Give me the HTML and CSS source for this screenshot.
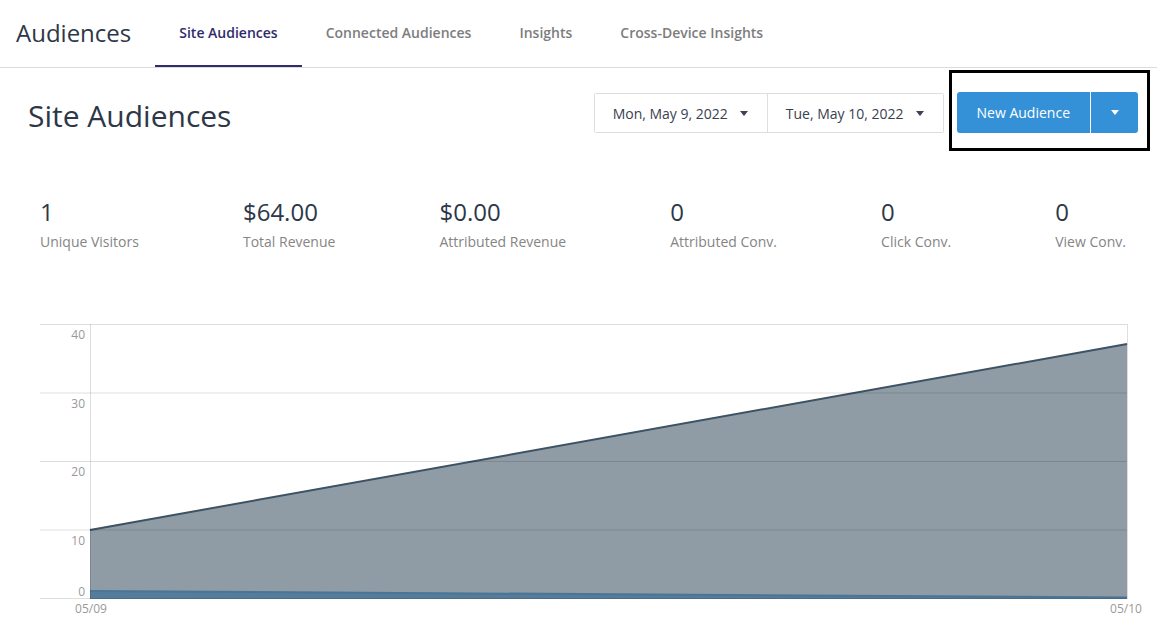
FILE: index.html
```html
<!DOCTYPE html>
<html>
<head>
<meta charset="utf-8">
<link rel="stylesheet" href="styles.css">
</head>
<body>
<header class="topbar">
  <div class="brand">Audiences</div>
  <nav class="tabs">
    <a class="tab active">Site Audiences</a>
    <a class="tab">Connected Audiences</a>
    <a class="tab">Insights</a>
    <a class="tab">Cross-Device Insights</a>
  </nav>
</header>

<section class="toolbar">
  <h1 class="title">Site Audiences</h1>
  <div class="dates">
    <button class="date-btn">Mon, May 9, 2022 <span class="caret"></span></button>
    <button class="date-btn">Tue, May 10, 2022 <span class="caret"></span></button>
  </div>
  <div class="split">
    <button class="primary">New Audience</button>
    <button class="primary drop"><span class="caret white"></span></button>
    <div class="annot"></div>
  </div>
</section>

<section class="stats">
  <div class="stat"><div class="val">1</div><div class="lbl">Unique Visitors</div></div>
  <div class="stat"><div class="val">$64.00</div><div class="lbl">Total Revenue</div></div>
  <div class="stat"><div class="val">$0.00</div><div class="lbl">Attributed Revenue</div></div>
  <div class="stat"><div class="val">0</div><div class="lbl">Attributed Conv.</div></div>
  <div class="stat"><div class="val">0</div><div class="lbl">Click Conv.</div></div>
  <div class="stat"><div class="val">0</div><div class="lbl">View Conv.</div></div>
</section>

<section class="chart">
  <svg width="1117" height="310" viewBox="0 0 1117 310">
    <polygon points="50,216 1087,30 1087,284.5 50,284.5" fill="#8f9ca5"/>
    <polygon points="50,277 1087,283.5 1087,285 50,285" fill="#557c9b"/>
    <line x1="50" y1="277" x2="1087" y2="283.5" stroke="#4a7596" stroke-width="2"/>
    <line x1="50" y1="216" x2="1087" y2="30" stroke="#3d5263" stroke-width="2"/>
    <g stroke="rgba(0,0,0,0.13)" stroke-width="1">
      <line x1="0" y1="10.5" x2="1087" y2="10.5"/>
      <line x1="0" y1="79" x2="1087" y2="79"/>
      <line x1="0" y1="147.5" x2="1087" y2="147.5"/>
      <line x1="0" y1="216" x2="1087" y2="216"/>
      <line x1="0" y1="284.5" x2="1087" y2="284.5"/>
      <line x1="50.5" y1="10" x2="50.5" y2="285"/>
      <line x1="1087.5" y1="10" x2="1087.5" y2="285"/>
    </g>
    <g class="axis" text-anchor="end">
      <text x="45" y="25">40</text>
      <text x="45" y="94">30</text>
      <text x="45" y="162">20</text>
      <text x="45" y="231">10</text>
      <text x="45" y="282">0</text>
    </g>
    <g class="axis" text-anchor="middle">
      <text x="51" y="299">05/09</text>
      <text x="1086" y="299">05/10</text>
    </g>
  </svg>
</section>
</body>
</html>
```

FILE: styles.css
```css
* { box-sizing: border-box; }
body {
  margin: 0;
  font-family: "Open Sans", "Noto Sans", sans-serif;
  color: #2d3748;
  background: #fff;
}
.topbar {
  display: flex;
  height: 68px;
  border-bottom: 1px solid #dcdcdc;
}
.brand {
  display: flex;
  align-items: center;
  padding-left: 16px;
  margin-right: 24px;
  font-size: 24px;
  color: #2d3748;
  padding-bottom: 2px;
}
.tabs { display: flex; }
.tab {
  display: flex;
  align-items: center;
  padding: 0 24px;
  font-size: 14px;
  font-weight: 600;
  color: #7d7d7d;
  border-bottom: 2px solid transparent;
  cursor: pointer;
}
.tab.active {
  color: #2f2b6c;
  border-bottom-color: #2f2b6c;
}
.toolbar {
  display: flex;
  align-items: center;
  padding: 22px 19px 0 28px;
}
.title {
  margin: 6px 0 0;
  font-size: 30px;
  font-weight: 400;
  line-height: 40px;
  color: #2d3748;
}
.dates {
  margin-left: auto;
  display: flex;
  height: 40px;
  border: 1px solid #dedede;
  border-radius: 2px;
}
.date-btn {
  display: flex;
  align-items: center;
  gap: 12px;
  padding: 0 19px 0 18px;
  border: 0;
  background: #fff;
  font-family: inherit;
  font-size: 14px;
  color: #3a4150;
}
.date-btn + .date-btn { border-left: 1px solid #dedede; }
.caret {
  display: inline-block;
  width: 0;
  height: 0;
  border-left: 4.5px solid transparent;
  border-right: 4.5px solid transparent;
  border-top: 5px solid #3a4150;
}
.caret.white { border-top-color: #fff; }
.split {
  position: relative;
  display: flex;
  margin-left: 13px;
  height: 41px;
  margin-top: -1px;
}
.primary {
  border: 0;
  background: #3591d7;
  color: #fff;
  font-family: inherit;
  font-size: 14px;
  padding: 0 20px;
  border-radius: 3px 0 0 3px;
}
.primary.drop {
  width: 47px;
  padding: 0;
  margin-left: 1px;
  border-radius: 0 3px 3px 0;
  display: flex;
  align-items: center;
  justify-content: center;
}
.annot {
  position: absolute;
  left: -8px;
  top: -22px;
  right: -12px;
  bottom: -18px;
  border: 3px solid #000;
  pointer-events: none;
}
.stats {
  display: flex;
  justify-content: space-between;
  padding: 0 31px 0 40px;
  margin-top: 60px;
}
.val {
  font-size: 24px;
  line-height: 32px;
  color: #2d3748;
}
.lbl {
  margin-top: 4px;
  font-size: 14px;
  line-height: 20px;
  color: #858585;
}
.chart {
  margin-top: 62px;
  padding-left: 40px;
  line-height: 0;
}
.axis text {
  font-family: "Open Sans", sans-serif;
  font-size: 12px;
  fill: #999;
}
```
